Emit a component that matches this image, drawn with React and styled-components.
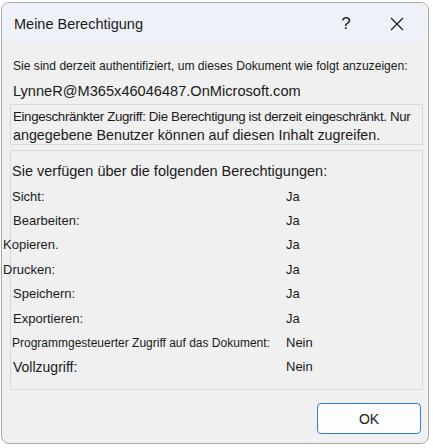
import React from "react";
import styled, { createGlobalStyle } from "styled-components";

const GlobalStyle = createGlobalStyle`
  body {
    margin: 0;
    background: #ffffff;
    font-family: "Liberation Sans", Arial, sans-serif;
    color: #1a1a1a;
  }
`;

const permissions = [
  { label: "Sicht:", value: "Ja", shift: 0, size: 13 },
  { label: "Bearbeiten:", value: "Ja", shift: 1, size: 13 },
  { label: "Kopieren.", value: "Ja", shift: -9, size: 13 },
  { label: "Drucken:", value: "Ja", shift: -9, size: 13 },
  { label: "Speichern:", value: "Ja", shift: 1, size: 13 },
  { label: "Exportieren:", value: "Ja", shift: 1, size: 13 },
  { label: "Programmgesteuerter Zugriff auf das Dokument:", value: "Nein", shift: 0, size: 12 },
  { label: "Vollzugriff:", value: "Nein", shift: 1, size: 14 },
];

function App() {
  return (
    <>
      <GlobalStyle />
      <Window>
        <TitleBar>
          <Title>Meine Berechtigung</Title>
          <TitleButton>?</TitleButton>
          <CloseButton>
            <svg width="14" height="14" viewBox="0 0 14 14">
              <path d="M1 1 L13 13 M13 1 L1 13" stroke="#1a1a1a" strokeWidth="1.2" fill="none" />
            </svg>
          </CloseButton>
        </TitleBar>
        <Body>
          <Intro>Sie sind derzeit authentifiziert, um dieses Dokument wie folgt anzuzeigen:</Intro>
          <Email>LynneR@M365x46046487.OnMicrosoft.com</Email>
          <NoticeBox>
            <NoticeLine size={13.3} tight>
              Eingeschränkter Zugriff: Die Berechtigung ist derzeit eingeschränkt. Nur
            </NoticeLine>
            <NoticeLine size={14.3}>angegebene Benutzer können auf diesen Inhalt zugreifen.</NoticeLine>
          </NoticeBox>
          <PermBox>
            <PermHeading>Sie verfügen über die folgenden Berechtigungen:</PermHeading>
            {permissions.map((p) => (
              <PermRow key={p.label}>
                <PermLabel shift={p.shift} size={p.size}>
                  {p.label}
                </PermLabel>
                <PermValue>{p.value}</PermValue>
              </PermRow>
            ))}
          </PermBox>
          <Footer>
            <OkButton>OK</OkButton>
          </Footer>
        </Body>
      </Window>
    </>
  );
}
export default App;

const Window = styled.div`
  margin: 2px 0 0 1px;
  width: 428px;
  height: 442px;
  box-sizing: border-box;
  border: 1px solid #a9a9a9;
  border-radius: 8px;
  overflow: hidden;
  background: #f0f0f0;
  display: flex;
  flex-direction: column;
`;

const TitleBar = styled.div`
  height: 40px;
  flex-shrink: 0;
  background: #eef2f8;
  display: flex;
  align-items: center;
  padding-left: 12px;
`;

const Title = styled.div`
  font-size: 14.5px;
  flex: 1;
  padding-top: 2px;
`;

const TitleButton = styled.div`
  width: 28px;
  text-align: center;
  font-size: 17px;
  font-weight: 300;
  margin-right: 30px;
  padding-top: 2px;
`;

const CloseButton = styled.div`
  width: 14px;
  height: 14px;
  margin-right: 24px;
  margin-top: 2px;
  display: flex;
`;

const Body = styled.div`
  flex: 1;
  display: flex;
  flex-direction: column;
  padding: 0 5px 0 8px;
`;

const Intro = styled.div`
  font-size: 12.1px;
  line-height: 16px;
  margin-top: 15px;
  padding-left: 3px;
  white-space: nowrap;
`;

const Email = styled.div`
  font-size: 14.6px;
  line-height: 20px;
  margin-top: 7px;
  padding-left: 3px;
  white-space: nowrap;
`;

const NoticeBox = styled.div`
  margin-top: 3px;
  height: 41px;
  flex-shrink: 0;
  box-sizing: border-box;
  border: 1px solid #d9d9d9;
  display: flex;
  flex-direction: column;
  padding: 2px 0 0 2px;
`;

const NoticeLine = styled.div`
  font-size: ${(p) => p.size}px;
  letter-spacing: ${(p) => (p.tight ? "-0.35px" : "0")};
  line-height: 19px;
  white-space: nowrap;
`;

const PermBox = styled.div`
  margin-top: 5px;
  height: 240px;
  flex-shrink: 0;
  box-sizing: border-box;
  border: 1px solid #d9d9d9;
  display: flex;
  flex-direction: column;
  padding: 10px 0 0 1px;
`;

const PermHeading = styled.div`
  font-size: 14.5px;
  line-height: 20px;
  margin-bottom: 3px;
  white-space: nowrap;
`;

const PermRow = styled.div`
  height: 24.4px;
  display: flex;
  align-items: center;
`;

const PermLabel = styled.div`
  width: 274px;
  margin-left: ${(p) => p.shift}px;
  margin-right: ${(p) => -p.shift}px;
  font-size: ${(p) => p.size}px;
  white-space: nowrap;
`;

const PermValue = styled.div`
  font-size: 13px;
`;

const Footer = styled.div`
  display: flex;
  justify-content: flex-end;
  margin-top: 13px;
`;

const OkButton = styled.button`
  width: 104px;
  height: 31px;
  margin-right: 2px;
  background: #fdfdfd;
  border: 1px solid #2f7fd6;
  border-radius: 4px;
  font-family: inherit;
  font-size: 14px;
  color: #1a1a1a;
`;
